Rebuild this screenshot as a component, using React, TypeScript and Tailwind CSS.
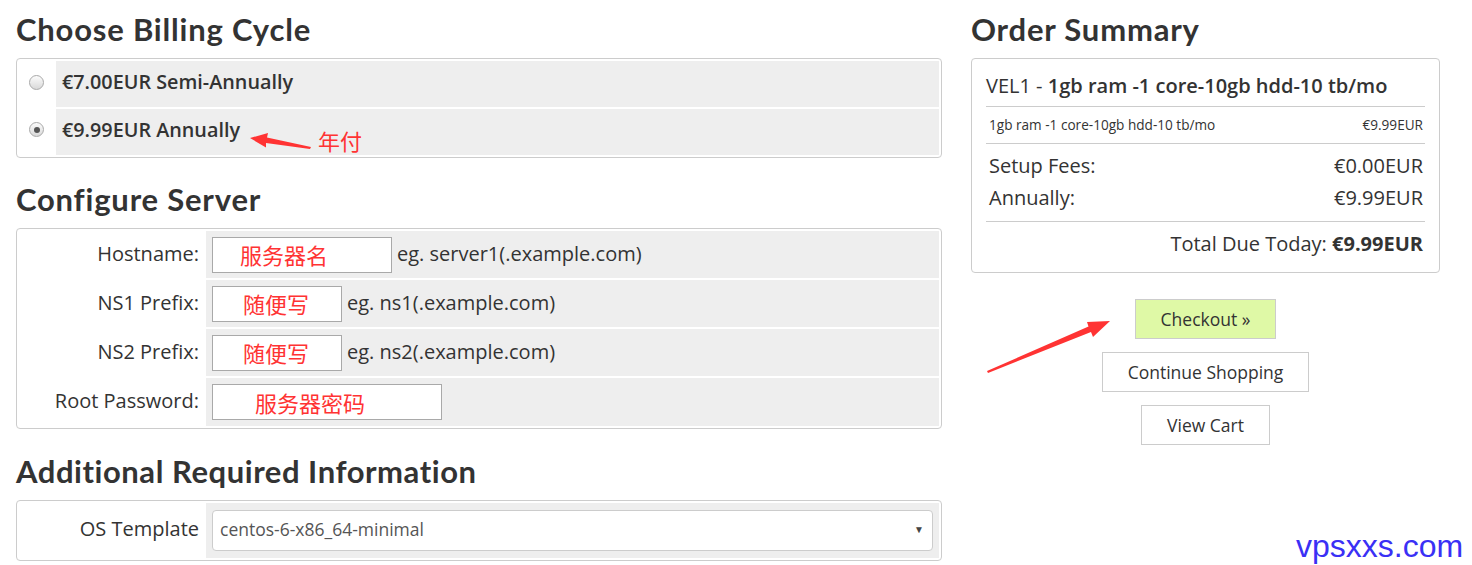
import React from "react";

const heading = "font-['Lato',sans-serif] font-bold text-[31px] leading-[36px] text-[#333]";
const body = "font-['Open_Sans',sans-serif] text-[#333]";
const cjk = "font-['Noto_Sans_CJK_SC',sans-serif] text-[22px] text-[#f33]";

function Radio({ checked }: { checked?: boolean }) {
    return (
        <div className="w-[15px] h-[15px] rounded-full border border-[#a9a9a9] bg-gradient-to-b from-[#fcfcfc] to-[#d9d9d9] flex items-center justify-center">
            {checked && <div className="w-[6px] h-[6px] rounded-full bg-[#555]" />}
        </div>
    );
}

function ConfigRow({ label, hint, value, width, pad, h }: { label: string; hint?: string; value: string; width: string; pad: string; h: string }) {
    return (
        <>
            <div className={`${h} flex items-center justify-end pr-[5px] pb-[2px] text-[20px] ${body}`}>{label}</div>
            <div className={`${h} bg-[#eee] flex items-center pl-[6px]`}>
                <div className={`${width} h-[36px] bg-white border border-[#a9a9a9] flex items-center ${pad} ${cjk}`}>{value}</div>
                {hint && <span className={`ml-[5px] pb-[2px] text-[20px] ${body}`}>{hint}</span>}
            </div>
        </>
    );
}

export default function App() {
    return (
        <div className="relative w-[1472px] h-[565px] bg-white overflow-hidden">
            <div className="flex pl-[16px] pt-[11px]">
                <div className="w-[926px]">
                    <h2 className={`${heading} tracking-[0.8px] mb-[11px]`}>Choose Billing Cycle</h2>
                    <div className="border border-[#ccc] rounded-[4px] p-[2px] grid grid-cols-[35px_1fr] gap-[2px]">
                        <div className="h-[46px] flex items-center justify-center pb-[3px]"><Radio /></div>
                        <div className={`h-[46px] bg-[#eee] flex items-center pl-[6px] pb-[4px] text-[19.8px] font-semibold ${body}`}>€7.00EUR Semi-Annually</div>
                        <div className="h-[46px] flex items-center justify-center pb-[5px]"><Radio checked /></div>
                        <div className={`h-[46px] bg-[#eee] flex items-center pl-[6px] pb-[5px] text-[19.8px] font-semibold ${body}`}>€9.99EUR Annually</div>
                    </div>

                    <h2 className={`${heading} tracking-[0.8px] mt-[23px] mb-[11px]`}>Configure Server</h2>
                    <div className="border border-[#ccc] rounded-[4px] p-[2px] grid grid-cols-[185px_1fr] gap-[2px]">
                        <ConfigRow label="Hostname:" hint="eg. server1(.example.com)" value="服务器名" width="w-[180px]" pad="pl-[27px]" h="h-[47px]" />
                        <ConfigRow label="NS1 Prefix:" hint="eg. ns1(.example.com)" value="随便写" width="w-[130px]" pad="pl-[30px]" h="h-[47px]" />
                        <ConfigRow label="NS2 Prefix:" hint="eg. ns2(.example.com)" value="随便写" width="w-[130px]" pad="pl-[30px]" h="h-[47px]" />
                        <ConfigRow label="Root Password:" value="服务器密码" width="w-[230px]" pad="pl-[42px]" h="h-[48px]" />
                    </div>

                    <h2 className={`${heading} tracking-[0.55px] mt-[24px] mb-[11px]`}>Additional Required Information</h2>
                    <div className="border border-[#ccc] rounded-[4px] p-[2px] grid grid-cols-[185px_1fr] gap-[2px]">
                        <div className={`h-[55px] flex items-center justify-end pr-[5px] pb-[3px] text-[20px] ${body}`}>OS Template</div>
                        <div className="h-[55px] bg-[#eee] flex items-center pl-[6px] pr-[6px]">
                            <div className="flex-1 h-[41px] bg-white border border-[#ccc] rounded-[4px] flex items-center justify-between pl-[7px] pr-[8px] pb-[2px]">
                                <span className="font-['Open_Sans',sans-serif] text-[17.5px] text-[#555]">centos-6-x86_64-minimal</span>
                                <span className="text-[10px] text-[#444]">▼</span>
                            </div>
                        </div>
                    </div>
                </div>

                <div className="w-[469px] ml-[29px]">
                    <h2 className={`${heading} tracking-[0.8px] mb-[11px]`}>Order Summary</h2>
                    <div className={`border border-[#ccc] rounded-[4px] px-[14px] pt-[14px] pb-[12px] ${body}`}>
                        <div className="text-[20px] leading-[26px] pb-[7px] border-b border-[#ccc]">
                            VEL1 - <span className="font-semibold">1gb ram -1 core-10gb hdd-10 tb/mo</span>
                        </div>
                        <div className="h-[37px] flex items-center justify-between pl-[3px] pr-[2px] text-[13.6px] border-b border-[#ccc]">
                            <span>1gb ram -1 core-10gb hdd-10 tb/mo</span>
                            <span>€9.99EUR</span>
                        </div>
                        <div className="pt-[6px] pb-[7px] pl-[3px] pr-[2px] text-[20px] leading-[32px] border-b border-[#ccc]">
                            <div className="flex justify-between"><span>Setup Fees:</span><span>€0.00EUR</span></div>
                            <div className="flex justify-between"><span>Annually:</span><span>€9.99EUR</span></div>
                        </div>
                        <div className="pt-[6px] pl-[3px] pr-[2px] text-[20px] leading-[32px] text-right">
                            Total Due Today: <span className="font-bold">€9.99EUR</span>
                        </div>
                    </div>
                    <div className={`flex flex-col items-center gap-[13px] mt-[26px] text-[17.5px] ${body}`}>
                        <button className="h-[40px] px-[25px] bg-[#dff9a6] border border-[#ccc]">Checkout »</button>
                        <button className="h-[40px] px-[25px] bg-white border border-[#ccc]">Continue Shopping</button>
                        <button className="h-[40px] px-[25px] bg-white border border-[#ccc]">View Cart</button>
                    </div>
                </div>
            </div>

            {/* annotations */}
            <svg className="absolute left-0 top-0 pointer-events-none" width="1472" height="565">
                <polygon fill="#f33" points="250,138 268,133 267,137.5 311,147 310,149 266,143 266,147.5" />
                <polygon fill="#f33" points="1110,321 1087,322 1088.5,326.5 987,371 988,373 1091,332 1093,337" />
            </svg>
            <span className={`absolute left-[318px] top-[124px] ${cjk}`}>年付</span>
            <span className="absolute left-[1296px] top-[522px] font-['Liberation_Sans',sans-serif] text-[32px] text-[#3a30f5]">vpsxxs.com</span>
        </div>
    );
}
